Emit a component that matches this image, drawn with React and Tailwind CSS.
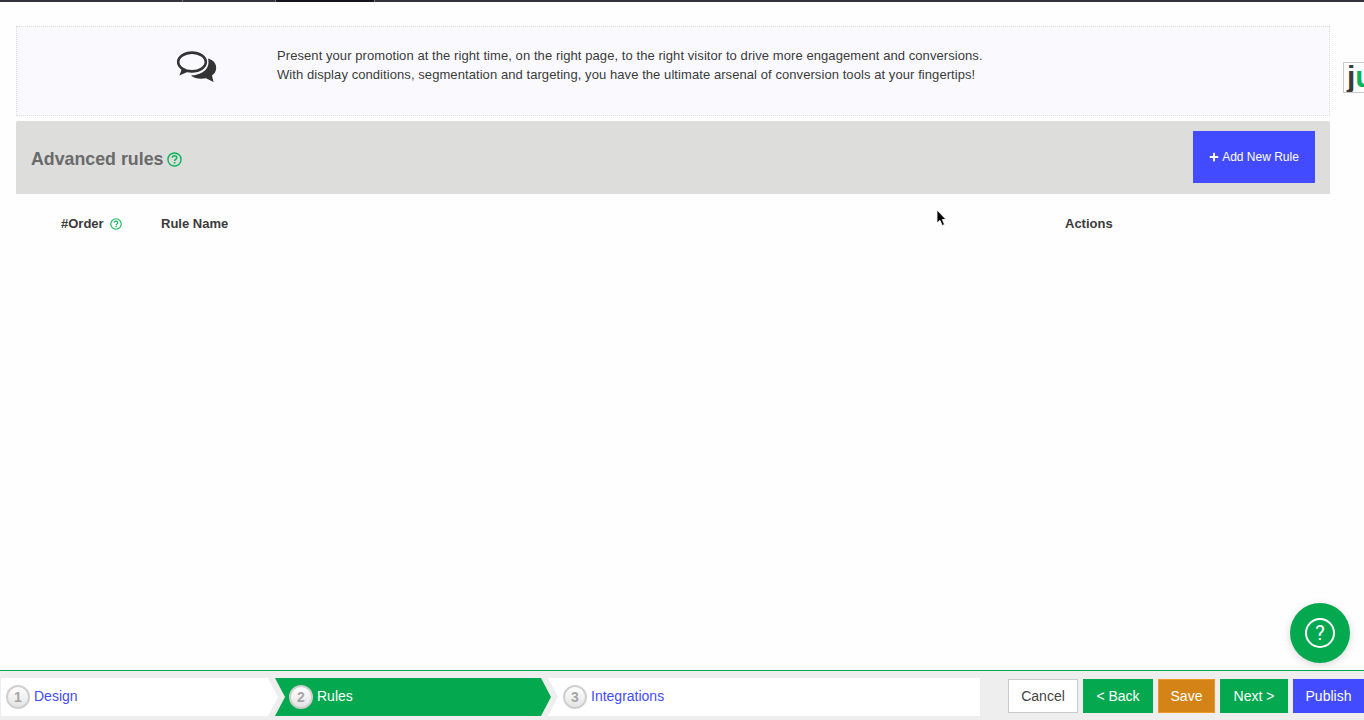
import React from "react";
import { FaPlus } from "react-icons/fa";

const HelpIcon = ({ className }) => (
  <svg viewBox="0 0 16 16" className={className} fill="none" aria-hidden="true">
    <circle cx="8" cy="8" r="7" stroke="#0bb45a" strokeWidth="1.500" />
    <path d="M5.6 6.2C5.7 4.8 6.700 4.100 8 4.100c1.400 0 2.400.8 2.400 2 0 1.900-2.300 1.800-2.300 3.600" stroke="#0bb45a" strokeWidth="1.600" />
    <rect x="7.200" y="10.600" width="1.800" height="1.700" fill="#0bb45a" />
  </svg>
);

const CommentsIcon = () => (
  <svg viewBox="0 0 42 34" className="w-[42px] h-[34px]" aria-hidden="true">
    <ellipse cx="16" cy="11" rx="13.800" ry="9.400" fill="none" stroke="#333" strokeWidth="2.600" />
    <path d="M6 17.500 L3.400 24.600 L12.500 20.600 Z" fill="#333" />
    <path d="M32 7.500C38 9 41 13.500 40 18.500C39.600 21 38 23 36 24.500L37.500 31L30 27.200C24 28.400 18.500 27.400 15 24.400C24 24.400 35 19 32 7.500Z" fill="#333" />
  </svg>
);

const StepBadge = ({ n }) => (
  <span className="w-6 h-6 shrink-0 rounded-full border-2 border-[#cfcfcf] bg-gradient-to-b from-white to-[#e4e4e4] flex items-center justify-center text-[14px] font-bold text-[#a6a6a6]">
    {n}
  </span>
);

export default function App() {
  return (
    <div className="relative h-screen w-full overflow-hidden flex flex-col bg-[#fffefe] font-['Liberation_Sans',Arial,sans-serif] text-[#3a3a3a]">
      <div className="h-[2px] shrink-0 flex bg-[#33333b]">
        <div className="w-[183px] border-r border-[#777]" />
        <div className="w-[93px] border-r border-[#777]" />
        <div className="w-[99px] bg-[#14141c] border-r border-[#777]" />
      </div>

      <main className="flex-1 min-h-0 pt-6 pl-4 w-[1330px]">
        <section className="h-[90px] flex border border-dotted border-[#dcdcdc] bg-[#fafafe]">
          <div className="w-[260px] shrink-0 pl-[159px] pt-[24px]">
            <CommentsIcon />
          </div>
          <p className="pt-[19px] text-[13px] tracking-[0.073px] leading-[19px] text-[#3a3a3a]">
            Present your promotion at the right time, on the right page, to the right visitor to drive more engagement and conversions.
            <br />
            With display conditions, segmentation and targeting, you have the ultimate arsenal of conversion tools at your fingertips!
          </p>
        </section>

        <section className="mt-[5px] h-[73px] rounded-t-[2px] bg-[#dddddc] pl-[15px] pr-[15px] pt-[10px] flex items-start justify-between">
          <h2 className="mt-[18px] flex items-center gap-[4px] text-[17.800px] leading-[21px] font-bold text-[#6a6a6a]">
            Advanced rules
            <HelpIcon className="w-[15px] h-[15px]" />
          </h2>
          <button className="w-[122px] h-[52px] bg-[#424bff] text-white text-[12px] flex items-center justify-center gap-[3px]">
            <FaPlus className="w-[10px] h-[10px]" />
            Add New Rule
          </button>
        </section>

        <div className="mt-[21px] pl-[45px] flex items-center text-[13px] leading-[17px] font-bold text-[#3a3a3a]">
          <div className="w-[100px] flex items-center gap-[6px]">
            #Order
            <HelpIcon className="w-3 h-3" />
          </div>
          <div className="w-[904px]">Rule Name</div>
          <div>Actions</div>
        </div>
      </main>

      <footer className="h-[50px] shrink-0 border-t border-[#04a84f] bg-[#eeeeee] pt-[7px] pl-px flex items-start text-[14px]">
        <div className="w-[979px] h-[38px] flex bg-[#eeeeee]">
          <div className="w-[277px] h-[38px] shrink-0 bg-white pl-[5px] flex items-center gap-[4px] text-[#424bff] [clip-path:polygon(0_0,267px_0,277px_19px,267px_38px,0_38px)]">
            <StepBadge n="1" />
            <span className="pb-[2px]">Design</span>
          </div>
          <div className="w-[276px] h-[38px] shrink-0 -ml-[3px] bg-[#04a84f] pl-[14px] flex items-center gap-[4px] text-white [clip-path:polygon(0_0,266px_0,276px_19px,266px_38px,0_38px,10px_19px)]">
            <StepBadge n="2" />
            <span className="pb-[2px]">Rules</span>
          </div>
          <div className="flex-1 h-[38px] -ml-[3px] bg-white pl-[15px] flex items-center gap-[4px] text-[#424bff] [clip-path:polygon(0_0,100%_0,100%_100%,0_100%,10px_19px)]">
            <StepBadge n="3" />
            <span className="pb-[2px]">Integrations</span>
          </div>
        </div>
        <div className="ml-[28px] mt-px flex gap-[5px]">
          <button className="w-[70px] h-[34px] bg-white border border-[#cccccc] text-[#444]">Cancel</button>
          <button className="w-[70px] h-[34px] bg-[#04a84f] text-white">&lt; Back</button>
          <button className="w-[57px] h-[34px] bg-[#d48416] border border-[#ee9a22] text-white">Save</button>
          <button className="w-[68px] h-[34px] bg-[#04a84f] text-white">Next &gt;</button>
          <button className="w-[71px] h-[34px] bg-[#424bff] text-white">Publish</button>
        </div>
      </footer>

      <div className="absolute left-[1343px] top-[62px] w-[21px] h-[31px] overflow-hidden border border-r-0 border-[#c9c9c9] bg-white pl-[3px] text-[30px] leading-[28px] font-bold whitespace-nowrap">
        <span className="text-[#3b3b3b]">j</span>
        <span className="text-[#0bb45a]">u</span>
      </div>

      <svg viewBox="0 0 11 18" className="absolute left-[936px] top-[209px] w-[11px] h-[18px]" aria-hidden="true">
        <path d="M1 1 L1 14 L4 11.300 L6.200 16.500 L8.500 15.500 L6.300 10.500 L10 10.500 Z" fill="#000" stroke="#fff" strokeWidth="0.800" />
      </svg>

      <button className="absolute left-[1290px] top-[603px] w-[60px] h-[60px] rounded-full bg-[#04a84f] shadow-[0_2px_8px_rgba(0,0,0,0.15)] flex items-center justify-center">
        <span className="w-[30px] h-[30px] rounded-full border-2 border-white text-white flex items-center justify-center text-[20px] leading-none font-['Roboto',sans-serif]">
          ?
        </span>
      </button>
    </div>
  );
}
